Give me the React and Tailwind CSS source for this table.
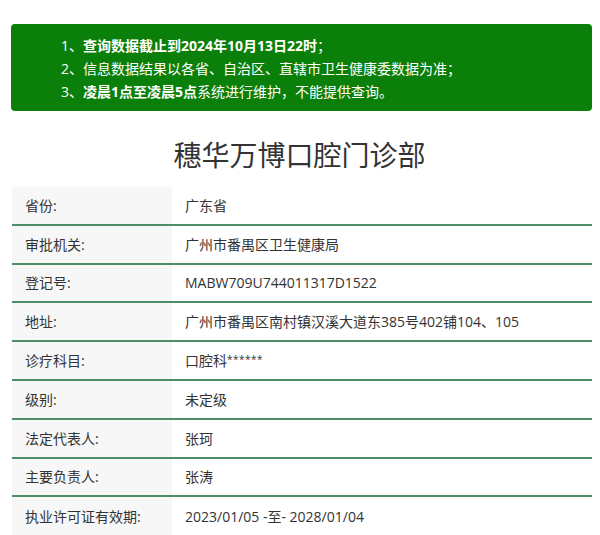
const rows = [
  { label: '省份:', value: '广东省' },
  { label: '审批机关:', value: '广州市番禺区卫生健康局' },
  { label: '登记号:', value: 'MABW709U744011317D1522' },
  { label: '地址:', value: '广州市番禺区南村镇汉溪大道东385号402铺104、105' },
  {
    label: '诊疗科目:',
    value: (
      <>
        口腔科<span className="relative -top-[3px] text-[10px] tracking-[0.5px]">******</span>
      </>
    ),
  },
  { label: '级别:', value: '未定级' },
  { label: '法定代表人:', value: '张珂' },
  { label: '主要负责人:', value: '张涛' },
  { label: '执业许可证有效期:', value: '2023/01/05 -至- 2028/01/04' },
];

export default function App() {
  return (
    <div
      className="w-[600px] h-[535px] overflow-hidden bg-white text-[#333]"
      style={{ fontFamily: '"Open Sans", "Noto Sans CJK SC", sans-serif' }}
    >
      <div className="pt-[24px] pl-[11px] pr-[8px]">
        {/* Notice */}
        <div className="w-[581px] rounded-[4px] bg-[#0a7f0a] text-white text-[14px] leading-[23px] pl-[50px] pt-[10px] pb-[8px]">
          <p>1、<b>查询数据截止到2024年10月13日22时</b>；</p>
          <p>2、信息数据结果以各省、自治区、直辖市卫生健康委数据为准；</p>
          <p>3、<b>凌晨1点至凌晨5点</b>系统进行维护，不能提供查询。</p>
        </div>

        {/* Title */}
        <h1 className="text-center text-[28px] leading-[40px] text-[#333] mt-[24px] mb-[12px] pr-[4px]">
          穗华万博口腔门诊部
        </h1>

        {/* Info table */}
        <div className="ml-[1px] w-[580px] text-[14px]">
          {rows.map((r, i) => (
            <div
              key={r.label}
              className={
                i < rows.length - 1
                  ? 'flex h-[38.8px] border-b-2 border-[#4f8d69]'
                  : 'flex h-[38.8px]'
              }
            >
              <div className="w-[160px] shrink-0 bg-[#f7f7f7] flex items-center pl-[13px]">
                {r.label}
              </div>
              <div className="flex-1 flex items-center pl-[13px]">
                <span>{r.value}</span>
              </div>
            </div>
          ))}
        </div>
      </div>
    </div>
  );
}
